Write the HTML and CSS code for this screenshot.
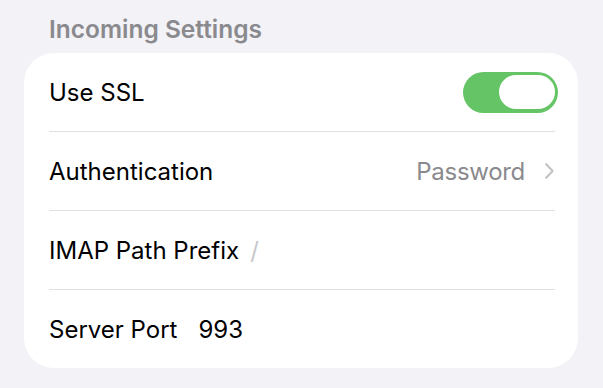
FILE: index.html
```html
<!DOCTYPE html>
<html lang="en">

<head>
    <meta charset="UTF-8">
    <title>Incoming Settings</title>
    <link rel="stylesheet" href="styles.css">
</head>

<body>
    <div class="wrapper">
        <h2 class="section-title">Incoming Settings</h2>
        <section class="card">
            <div class="row">
                <div class="inner">
                    <span class="label">Use SSL</span>
                    <span class="toggle on"><span class="knob"></span></span>
                </div>
            </div>
            <div class="row">
                <div class="inner">
                    <span class="label">Authentication</span>
                    <span class="detail">Password</span>
                    <svg class="chevron" width="9" height="16" viewBox="0 0 9 16">
                        <polyline points="1.2,1.2 7.6,8 1.2,14.8" fill="none" stroke="#c4c4c7" stroke-width="2.2" stroke-linecap="round" stroke-linejoin="round" />
                    </svg>
                </div>
            </div>
            <div class="row">
                <div class="inner">
                    <span class="label">IMAP Path Prefix</span>
                    <span class="placeholder">/</span>
                </div>
            </div>
            <div class="row last">
                <div class="inner">
                    <span class="label">Server Port</span>
                    <span class="value">993</span>
                </div>
            </div>
        </section>
    </div>
</body>

</html>
```

FILE: styles.css
```css
* {
    margin: 0;
    box-sizing: border-box;
}

body {
    background-color: #f2f2f7;
    font-family: Inter, "Liberation Sans", Arial, sans-serif;
    color: #000;
}

.wrapper {
    padding: 15px 25px 0 24px;
}

.section-title {
    font-size: 24.5px;
    line-height: 28px;
    font-weight: 600;
    color: #8a8a8e;
    padding-left: 25px;
    margin-bottom: 10px;
}

.card {
    background: #fff;
    border-radius: 30px;
}

.row {
    padding-left: 25px;
    padding-right: 23px;
}

.inner {
    height: 79px;
    display: flex;
    align-items: center;
    border-bottom: 1px solid #e0e0e2;
    font-size: 24px;
}

.last .inner {
    height: 78px;
    border-bottom: none;
}

.label {
    flex: none;
}

.toggle {
    margin-left: auto;
    margin-right: -3px;
    width: 95px;
    height: 41px;
    border-radius: 21px;
    background-color: #65c466;
    display: flex;
    align-items: center;
    justify-content: flex-end;
    padding: 0 3px;
}

.knob {
    width: 56px;
    height: 34px;
    border-radius: 17px;
    background: #fff;
}

.detail {
    margin-left: auto;
    color: #8a8a8e;
    letter-spacing: -0.3px;
}

.chevron {
    margin-left: 20px;
    margin-right: 1px;
}

.placeholder {
    margin-left: 11px;
    color: #c7c7cc;
}

.value {
    margin-left: 21px;
}
```
